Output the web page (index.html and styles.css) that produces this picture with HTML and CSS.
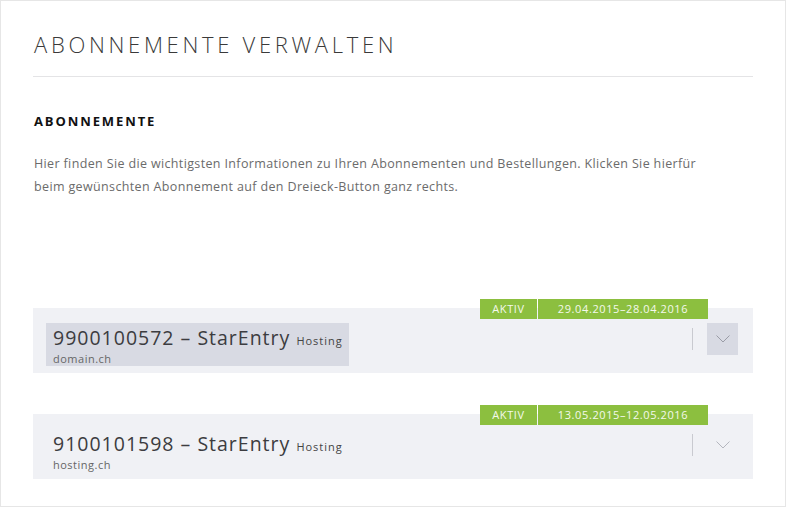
FILE: index.html
```html
<!DOCTYPE html>
<html lang="de">
<head>
<meta charset="utf-8">
<title>Abonnemente verwalten</title>
<link rel="stylesheet" href="styles.css">
</head>
<body>
<div class="page">
  <h1 class="title">ABONNEMENTE VERWALTEN</h1>
  <h2 class="subtitle">ABONNEMENTE</h2>
  <p class="intro">Hier finden Sie die wichtigsten Informationen zu Ihren Abonnementen und Bestellungen. Klicken Sie hierfür<br>beim gewünschten Abonnement auf den Dreieck-Button ganz rechts.</p>

  <div class="list">
    <div class="card">
      <div class="badges"><span class="badge status">AKTIV</span><span class="badge period">29.04.2015–28.04.2016</span></div>
      <div class="info active">
        <div class="name">9900100572 – StarEntry <span class="type">Hosting</span></div>
        <div class="domain">domain.ch</div>
      </div>
      <div class="actions">
        <span class="sep"></span>
        <button class="toggle active" type="button" aria-label="Details">
          <svg width="14" height="8" viewBox="0 0 14 8"><path d="M0.5 0.5 L7 7 L13.5 0.5" fill="none" stroke="#9a9ca6" stroke-width="1"/></svg>
        </button>
      </div>
    </div>

    <div class="card">
      <div class="badges"><span class="badge status">AKTIV</span><span class="badge period">13.05.2015–12.05.2016</span></div>
      <div class="info">
        <div class="name">9100101598 – StarEntry <span class="type">Hosting</span></div>
        <div class="domain">hosting.ch</div>
      </div>
      <div class="actions">
        <span class="sep"></span>
        <button class="toggle" type="button" aria-label="Details">
          <svg width="14" height="8" viewBox="0 0 14 8"><path d="M0.5 0.5 L7 7 L13.5 0.5" fill="none" stroke="#b4b6be" stroke-width="1"/></svg>
        </button>
      </div>
    </div>
  </div>
</div>
</body>
</html>
```

FILE: styles.css
```css
* { box-sizing: border-box; }
html, body { margin: 0; padding: 0; background: #fff; }
body { font-family: "Open Sans", "Liberation Sans", sans-serif; color: #333; }

.page {
  width: 786px;
  height: 507px;
  border: 1px solid #e6e6e6;
  padding: 0 32px;
  overflow: hidden;
}

.title {
  margin: 0;
  padding: 29px 0 18px 1px;
  font-size: 22px;
  font-weight: 300;
  letter-spacing: 3.7px;
  line-height: 28px;
  color: #3a3a3a;
  border-bottom: 1px solid #e4e4e6;
}

.subtitle {
  margin: 35px 0 0 1px;
  font-size: 13px;
  font-weight: 700;
  letter-spacing: 1.9px;
  line-height: 18px;
  color: #111;
}

.intro {
  margin: 22px 0 0 1px;
  font-size: 12.5px;
  line-height: 23px;
  letter-spacing: 0.36px;
  color: #6b6b6b;
}

.list {
  margin-top: 110px;
  display: flex;
  flex-direction: column;
  gap: 41px;
}

.card {
  position: relative;
  height: 65px;
  background: #f0f1f5;
  padding: 15px 15px 7px 13px;
  display: flex;
  justify-content: space-between;
  align-items: flex-start;
}

.badges {
  position: absolute;
  top: -9px;
  right: 45px;
  display: flex;
  gap: 1px;
}
.badge {
  background: #8cbf3f;
  color: #f4f9ec;
  font-size: 11px;
  letter-spacing: 0.6px;
  height: 20px;
  line-height: 20px;
  text-align: center;
}
.badge.status { width: 57px; }
.badge.period { width: 170px; }

.info {
  width: 303px;
  height: 43px;
  padding: 3px 7px 0;
}
.info.active { background: #d8dae3; }

.name {
  font-size: 19.5px;
  line-height: 24px;
  letter-spacing: 1px;
  color: #3c3c40;
  white-space: nowrap;
}
.type {
  font-size: 11px;
  letter-spacing: 1px;
  color: #444;
}
.domain {
  font-size: 11px;
  line-height: 12px;
  letter-spacing: 0.5px;
  color: #666;
}

.actions {
  display: flex;
  align-items: center;
  gap: 14px;
  height: 32px;
}
.sep {
  width: 1px;
  height: 22px;
  background: #c9cad0;
}
.toggle {
  width: 31px;
  height: 32px;
  border: 0;
  padding: 0;
  margin: 0;
  background: transparent;
  display: flex;
  align-items: center;
  justify-content: center;
}
.toggle.active { background: #d8dae3; }
```
